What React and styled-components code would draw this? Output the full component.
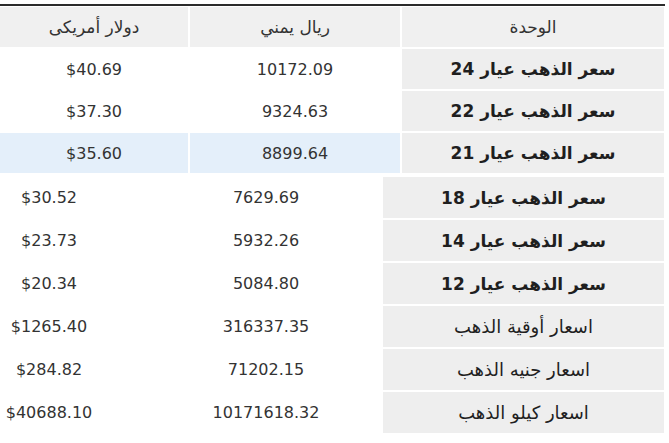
import React from "react";
import styled, { createGlobalStyle } from "styled-components";

const GlobalStyle = createGlobalStyle`
  html, body {
    margin: 0;
    padding: 0;
    background: #ffffff;
  }
  body {
    font-family: "DejaVu Sans", "Liberation Sans", sans-serif;
    color: #333333;
  }
`;

const Page = styled.div`
  width: 669px;
  padding-top: 4px;
`;

const TopRule = styled.div`
  width: 665px;
  height: 2px;
  background: #2b2b2b;
  margin-bottom: 1px;
`;

const Table = styled.div`
  direction: rtl;
  display: grid;
  grid-template-columns: ${(p) => p.$columns};
  grid-auto-rows: ${(p) => p.$rowHeight}px;
  gap: 2px;
  width: 664px;
  margin-top: ${(p) => p.$top || 0}px;
`;

const Cell = styled.div`
  display: flex;
  align-items: center;
  justify-content: center;
  background: ${(p) => p.$bg || "transparent"};
  white-space: nowrap;
`;

const HeaderCell = styled(Cell)`
  background: #f0f0f0;
  font-size: 17px;
  color: #333333;
`;

const LabelCell = styled(Cell)`
  background: #eeeeee;
  font-size: ${(p) => (p.$light ? 18 : 17)}px;
  font-weight: ${(p) => (p.$light ? 400 : 700)};
  color: #1f1f1f;
`;

const ValueCell = styled(Cell)`
  font-size: 16px;
  color: #333333;
  padding-right: ${(p) => p.$padRight || 0}px;
`;

const topRows = [
  { label: "سعر الذهب عيار 24", yer: "10172.09", usd: "$40.69" },
  { label: "سعر الذهب عيار 22", yer: "9324.63", usd: "$37.30" },
  { label: "سعر الذهب عيار 21", yer: "8899.64", usd: "$35.60", hl: true },
];

const bottomRows = [
  { label: "سعر الذهب عيار 18", yer: "7629.69", usd: "$30.52" },
  { label: "سعر الذهب عيار 14", yer: "5932.26", usd: "$23.73" },
  { label: "سعر الذهب عيار 12", yer: "5084.80", usd: "$20.34" },
  { label: "اسعار أوقية الذهب", yer: "316337.35", usd: "$1265.40", light: true },
  { label: "اسعار جنيه الذهب", yer: "71202.15", usd: "$284.82", light: true },
  { label: "اسعار كيلو الذهب", yer: "10171618.32", usd: "$40688.10", light: true },
];

function App() {
  return (
    <>
      <GlobalStyle />
      <Page>
        <TopRule />
        <Table $columns="262px 210px 188px" $rowHeight={40}>
          <HeaderCell>الوحدة</HeaderCell>
          <HeaderCell>ريال يمني</HeaderCell>
          <HeaderCell>دولار أمريكى</HeaderCell>
          {topRows.map((row) => (
            <React.Fragment key={row.label}>
              <LabelCell>{row.label}</LabelCell>
              <ValueCell $bg={row.hl ? "#e4effa" : "#ffffff"}>{row.yer}</ValueCell>
              <ValueCell $bg={row.hl ? "#e4effa" : "#ffffff"}>{row.usd}</ValueCell>
            </React.Fragment>
          ))}
        </Table>
        <Table $columns="281px 230px 149px" $rowHeight={41} $top={4}>
          {bottomRows.map((row) => (
            <React.Fragment key={row.label}>
              <LabelCell $light={row.light}>{row.label}</LabelCell>
              <ValueCell>{row.yer}</ValueCell>
              <ValueCell $padRight={51}>{row.usd}</ValueCell>
            </React.Fragment>
          ))}
        </Table>
      </Page>
    </>
  );
}

export default App;
